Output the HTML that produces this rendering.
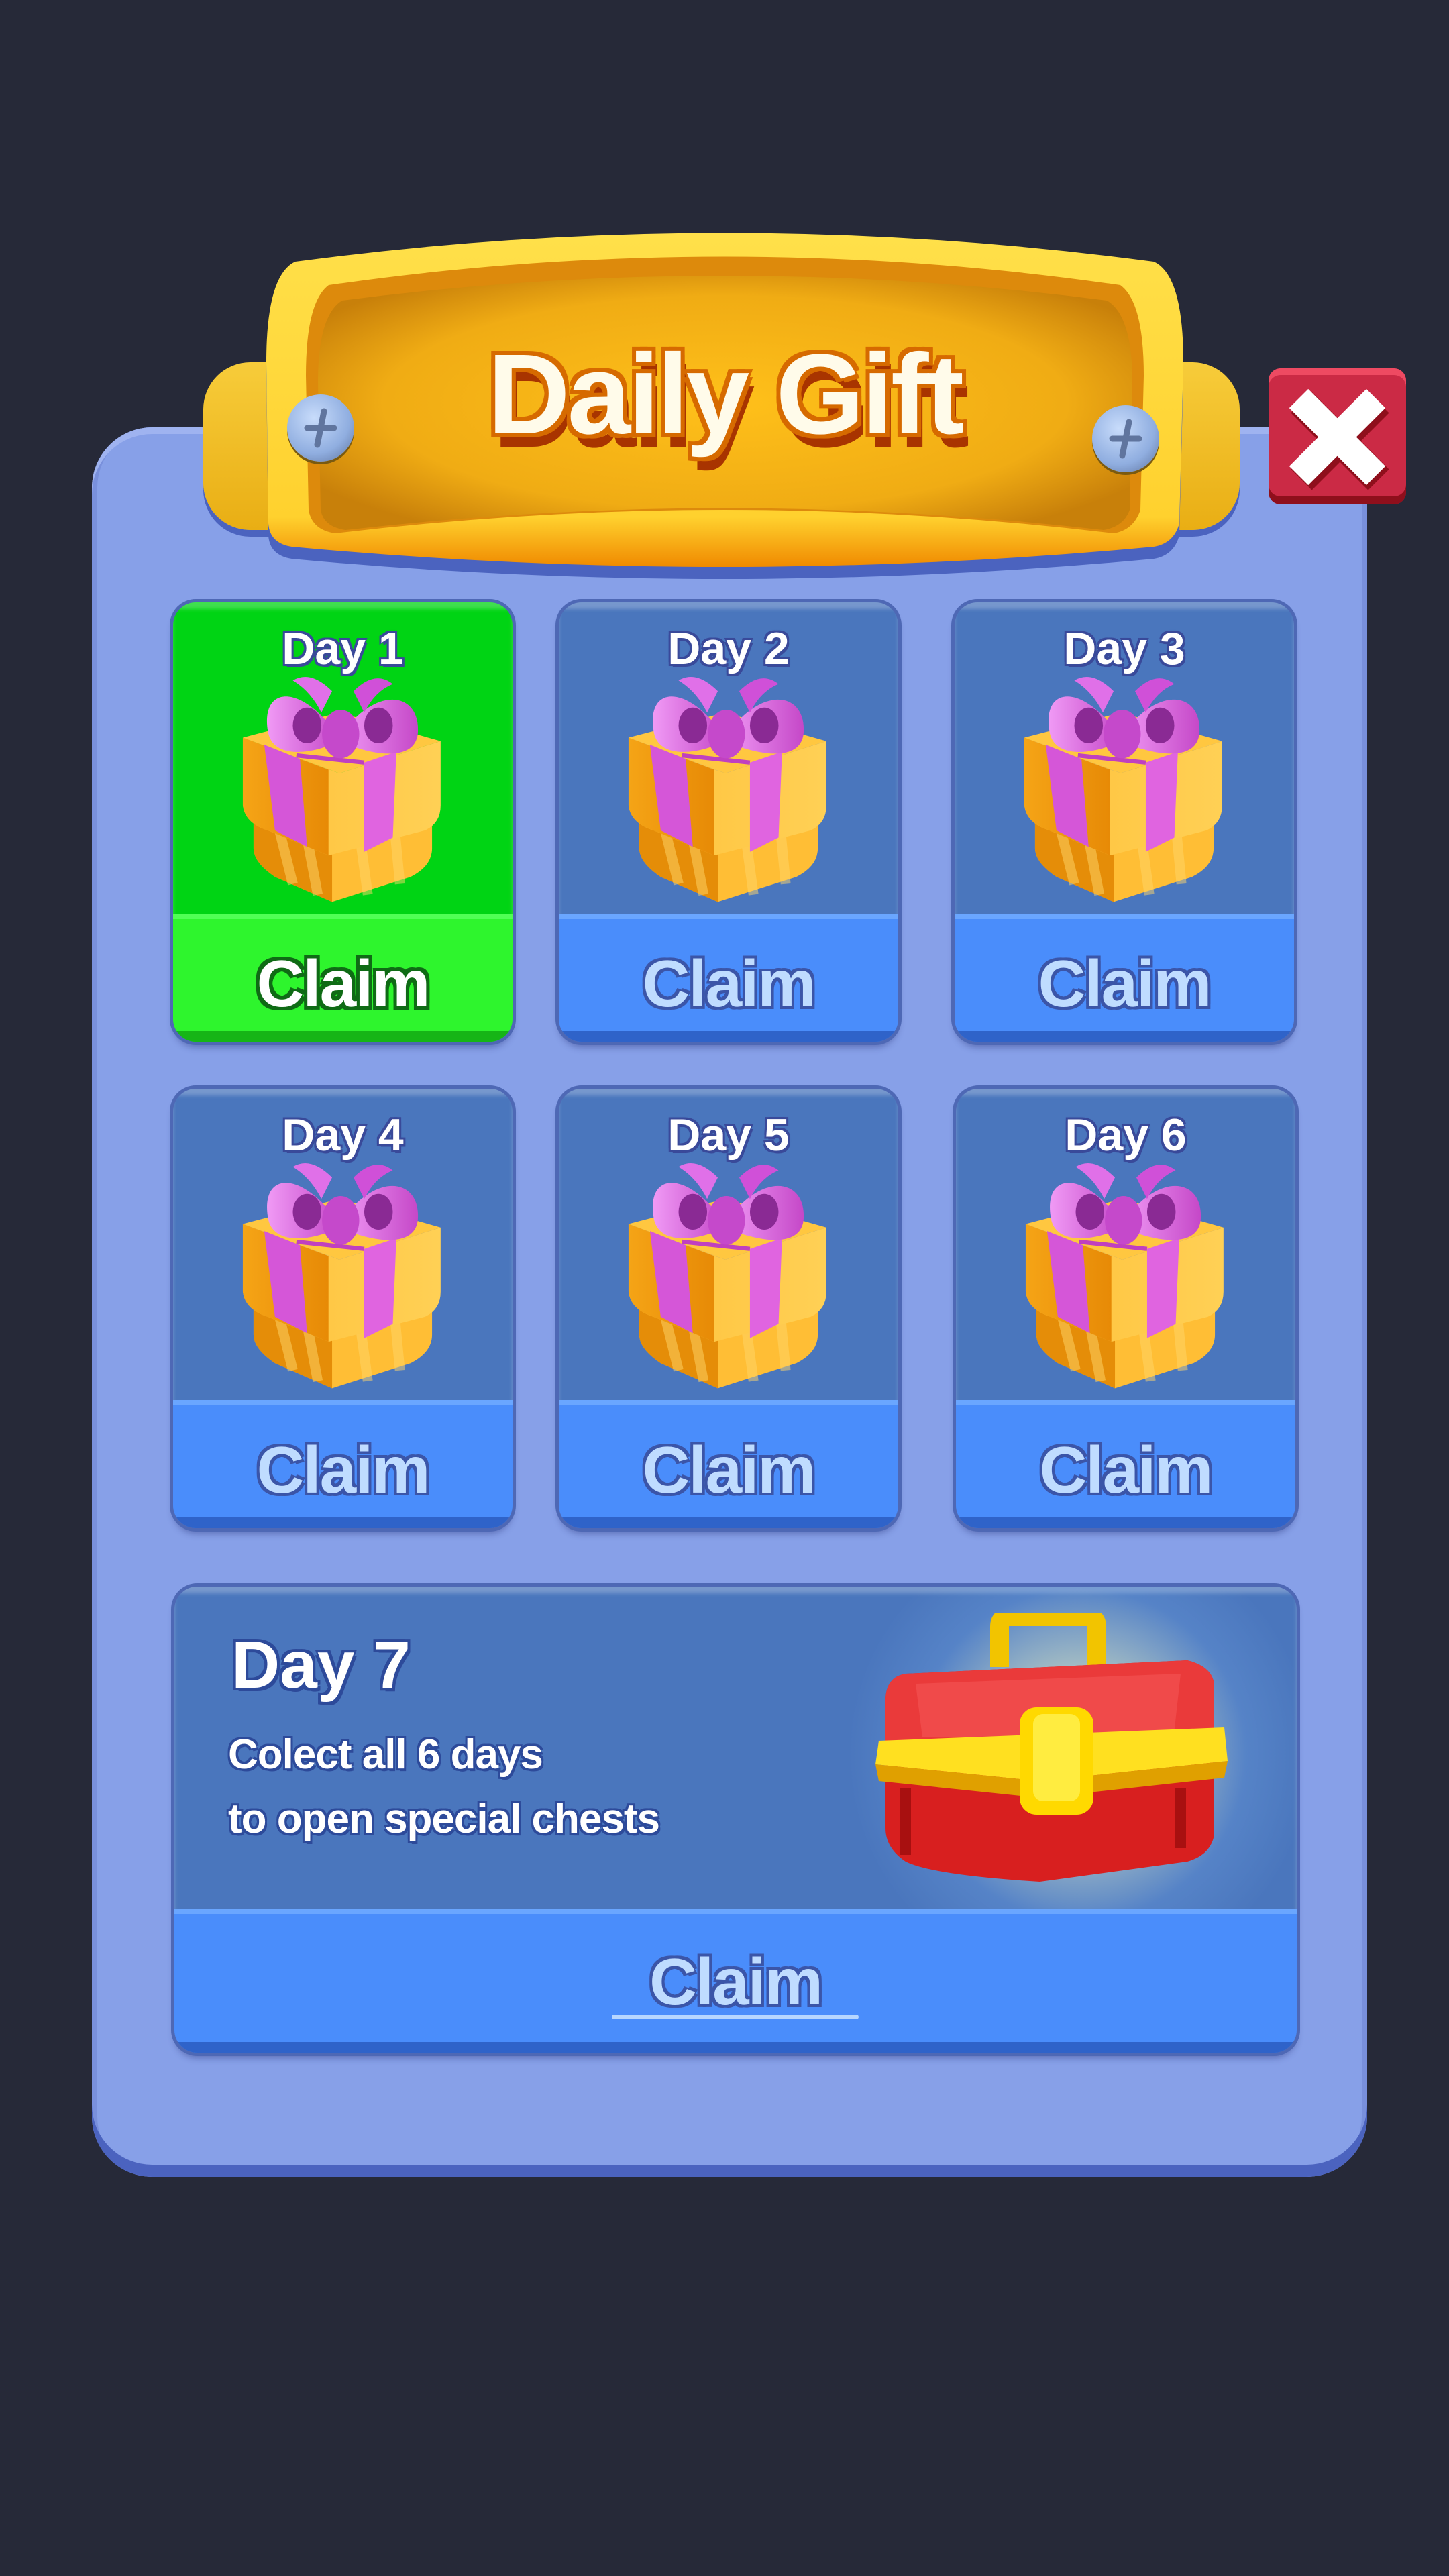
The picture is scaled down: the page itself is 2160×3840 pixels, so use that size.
<!DOCTYPE html>
<html><head><meta charset="utf-8">
<style>
*{margin:0;padding:0;box-sizing:border-box}
html,body{width:2160px;height:3840px;background:#262938;overflow:hidden;font-family:"Liberation Sans",sans-serif}
.abs{position:absolute}
.panel{left:137px;top:637px;width:1901px;height:2608px;border-radius:90px;background:#87a0e8;box-shadow:inset 0 -18px 0 #4b63bf,inset 0 10px 0 #9fb3f0,inset 8px 0 0 #7990dc,inset -8px 0 0 #7990dc;}
.card{border-radius:34px;overflow:hidden;background:#4a76bd;box-shadow:0 0 0 5px #4e68b5,0 8px 10px rgba(30,40,110,.4);}
.card .top{position:absolute;left:0;top:0;right:0;height:466px;box-shadow:inset 0 10px 6px rgba(255,255,255,.25)}
.card .bot{position:absolute;left:0;bottom:0;right:0;height:191px;background:#4a8dfb;border-top:8px solid #6aa6ff;box-shadow:inset 0 -16px 0 #2f63c9}
.day{position:absolute;left:0;right:0;top:30px;text-align:center;font-weight:bold;font-size:68px;color:#fff;text-shadow:0 0 4px #3a4a9a,3px 4px 0 #3a4a9a,-3px -3px 0 #3a4a9a,3px -3px 0 #3a4a9a,-3px 3px 0 #3a4a9a}
.claim{position:absolute;left:0;right:0;top:40px;text-align:center;font-weight:bold;font-size:98px;color:#bfdcff;letter-spacing:-2px;text-shadow:4px 4px 0 #3b55a8,-4px -4px 0 #3b55a8,4px -4px 0 #3b55a8,-4px 4px 0 #3b55a8}
.green .top{background:#00d414}
.green .bot{background:#2ef52d;border-top-color:#50ff55;box-shadow:inset 0 -16px 0 #16b516}
.green .claim{color:#fff;text-shadow:5px 5px 0 #0f6b15,-5px -5px 0 #0f6b15,5px -5px 0 #0f6b15,-5px 5px 0 #0f6b15}
.gift{position:absolute;left:50%;margin-left:-165px;top:100px;width:330px;height:352px}
</style></head><body>
<svg width="0" height="0" style="position:absolute">
<defs>
<linearGradient id="gL" x1="0" x2="1"><stop offset="0" stop-color="#f5a416"/><stop offset="1" stop-color="#e78a06"/></linearGradient>
<linearGradient id="gR" x1="0" x2="1"><stop offset="0" stop-color="#ffc23a"/><stop offset="1" stop-color="#ffd055"/></linearGradient>
<linearGradient id="pk" x1="0" x2="1"><stop offset="0" stop-color="#f09af5"/><stop offset="1" stop-color="#c548c8"/></linearGradient>
<g id="giftg">
<path d="M30 160 L30 250 Q30 270 60 290 L140 325 L250 290 Q280 275 280 250 L280 165 L150 200 Z" fill="#ffbe35"/>
<path d="M30 160 L30 250 Q30 270 60 290 L140 325 L140 200 Z" fill="#e58d08"/>
<path d="M60 200 L85 300 M100 210 L120 315 M175 205 L190 315 M225 195 L235 300" stroke="#ffd76a" stroke-width="14" opacity=".5"/>
<path d="M15 95 L15 190 Q18 215 50 225 L135 260 L270 225 Q292 215 292 190 L292 100 L150 145 Z" fill="url(#gR)"/>
<path d="M15 95 L15 190 Q18 215 50 225 L135 260 L135 140 Z" fill="url(#gL)"/>
<path d="M15 95 L150 60 L292 100 L150 145 Z" fill="#ffc740"/>
<path d="M45 105 L60 225 L105 248 L95 125 Z" fill="#d556d8"/>
<path d="M185 130 L185 255 L225 235 L230 115 Z" fill="#e064e0"/>
<path d="M90 120 L185 130" stroke="#c040c0" stroke-width="6"/>
<path d="M150 95 C100 20 40 20 50 85 C55 125 110 120 150 100 Z" fill="url(#pk)"/>
<path d="M150 95 C200 20 265 30 260 90 C255 130 195 120 150 100 Z" fill="url(#pk)"/>
<ellipse cx="105" cy="78" rx="20" ry="25" fill="#8a2a94"/>
<ellipse cx="205" cy="78" rx="20" ry="25" fill="#8a2a94"/>
<path d="M85 15 Q110 0 140 30 L125 60 Q110 30 85 15 Z" fill="#e070e8"/>
<path d="M170 30 Q200 0 225 20 Q200 30 185 60 Z" fill="#d050d8"/>
<ellipse cx="152" cy="90" rx="26" ry="34" fill="#c549cb"/>
</g>
</defs>
</svg>

<div class="abs panel"></div>

<!-- banner side tabs -->
<div class="abs" style="left:303px;top:540px;width:1545px;height:250px;border-radius:70px;background:linear-gradient(#f7cc3a,#e9ae14);box-shadow:0 10px 0 #4b63bf"></div>
<!-- banner -->
<svg class="abs" style="left:390px;top:340px" width="1380" height="540" viewBox="0 0 1380 540">
<defs>
<linearGradient id="bo" x1="0" y1="0" x2="0" y2="1"><stop offset="0" stop-color="#ffe04a"/><stop offset=".85" stop-color="#ffd12e"/><stop offset="1" stop-color="#f08a00"/></linearGradient>
<radialGradient id="bi" cx=".5" cy=".5" r=".6"><stop offset="0" stop-color="#ffc01a"/><stop offset=".7" stop-color="#f0ac14"/><stop offset="1" stop-color="#c8800a"/></radialGradient>
</defs>
<path d="M50 50 Q690 -35 1330 50 Q1374 70 1374 200 L1368 440 Q1360 470 1330 475 Q690 535 45 475 Q12 470 10 440 L7 200 Q7 70 50 50 Z" fill="#4b63bf" transform="translate(0,18)"/>
<path d="M50 50 Q690 -35 1330 50 Q1374 70 1374 200 L1368 440 Q1360 470 1330 475 Q690 535 45 475 Q12 470 10 440 L7 200 Q7 70 50 50 Z" fill="url(#bo)"/>
<path d="M100 85 Q690 0 1280 85 Q1315 110 1315 220 L1310 420 Q1300 450 1270 455 Q690 385 110 455 Q75 450 70 420 L66 220 Q66 110 100 85 Z" fill="#dd8a0c"/>
<path d="M120 108 Q690 34 1260 108 Q1298 130 1298 230 L1294 420 Q1285 445 1255 450 Q690 385 125 450 Q92 445 88 420 L84 230 Q84 130 120 108 Z" fill="url(#bi)"/>
</svg>
<!-- screws -->
<div class="abs" style="left:428px;top:588px;width:100px;height:100px;border-radius:50%;background:radial-gradient(circle at 40% 35%,#c8dcfb,#90aee0 60%,#5a6f9a);box-shadow:0 4px 0 #7a5a10"></div>
<div class="abs" style="left:1628px;top:604px;width:100px;height:100px;border-radius:50%;background:radial-gradient(circle at 40% 35%,#c8dcfb,#90aee0 60%,#5a6f9a);box-shadow:0 4px 0 #7a5a10"></div>
<svg class="abs" style="left:428px;top:588px" width="100" height="100"><path d="M30 50 L70 50 M55 25 L45 75" stroke="#60759e" stroke-width="9" stroke-linecap="round"/></svg>
<svg class="abs" style="left:1628px;top:604px" width="100" height="100"><path d="M30 50 L70 50 M55 25 L45 75" stroke="#60759e" stroke-width="9" stroke-linecap="round"/></svg>
<!-- title -->
<div class="abs" style="left:600px;top:490px;width:960px;text-align:center;font-weight:bold;font-size:170px;letter-spacing:-4px;color:#fffbea;text-shadow:6px 6px 0 #d66a00,-6px -6px 0 #d66a00,6px -6px 0 #d66a00,-6px 6px 0 #d66a00,8px 20px 0 #a83400">Daily Gift</div>

<!-- close -->
<div class="abs" style="left:1891px;top:549px;width:205px;height:203px;border-radius:18px;background:#cb2a45;box-shadow:inset 0 10px 0 #ee4a62,inset 0 -12px 0 #8f0f1c"></div>
<svg class="abs" style="left:1891px;top:549px" width="205" height="203" viewBox="0 0 205 203">
<path d="M45 45 L160 160 M160 45 L45 160" stroke="#8f0f1c" stroke-width="44" transform="translate(4,6)"/>
<path d="M45 45 L160 160 M160 45 L45 160" stroke="#fff" stroke-width="40"/>
</svg>

<!-- row 1 -->
<div class="abs card green" style="left:258px;top:898px;width:506px;height:655px"><div class="top"></div><div class="day">Day 1</div><svg class="gift" viewBox="0 0 310 330"><use href="#giftg"/></svg><div class="bot"><div class="claim">Claim</div></div></div>
<div class="abs card" style="left:833px;top:898px;width:506px;height:655px"><div class="top"></div><div class="day">Day 2</div><svg class="gift" viewBox="0 0 310 330"><use href="#giftg"/></svg><div class="bot"><div class="claim">Claim</div></div></div>
<div class="abs card" style="left:1423px;top:898px;width:506px;height:655px"><div class="top"></div><div class="day">Day 3</div><svg class="gift" viewBox="0 0 310 330"><use href="#giftg"/></svg><div class="bot"><div class="claim">Claim</div></div></div>
<!-- row 2 -->
<div class="abs card" style="left:258px;top:1623px;width:506px;height:655px"><div class="top"></div><div class="day">Day 4</div><svg class="gift" viewBox="0 0 310 330"><use href="#giftg"/></svg><div class="bot"><div class="claim">Claim</div></div></div>
<div class="abs card" style="left:833px;top:1623px;width:506px;height:655px"><div class="top"></div><div class="day">Day 5</div><svg class="gift" viewBox="0 0 310 330"><use href="#giftg"/></svg><div class="bot"><div class="claim">Claim</div></div></div>
<div class="abs card" style="left:1425px;top:1623px;width:506px;height:655px"><div class="top"></div><div class="day">Day 6</div><svg class="gift" viewBox="0 0 310 330"><use href="#giftg"/></svg><div class="bot"><div class="claim">Claim</div></div></div>

<!-- day 7 -->
<div class="abs card" style="left:260px;top:2365px;width:1673px;height:695px">
<div class="top" style="height:480px"></div>
<div class="abs" style="left:1000px;top:-100px;width:700px;height:700px;border-radius:50%;background:radial-gradient(circle,rgba(255,255,200,.95) 0%,rgba(230,240,200,.6) 25%,rgba(120,170,230,.25) 50%,rgba(74,118,189,0) 70%)"></div>
<div class="abs" style="left:85px;top:60px;font-weight:bold;font-size:100px;color:#fff;text-shadow:4px 5px 0 #2d4a9a,-4px -4px 0 #2d4a9a,4px -4px 0 #2d4a9a,-4px 4px 0 #2d4a9a">Day 7</div>
<div class="abs" style="left:80px;top:203px;font-weight:bold;font-size:62px;line-height:96px;letter-spacing:-1px;color:#fff;text-shadow:3px 4px 0 #2d4a9a,-3px -3px 0 #2d4a9a,3px -3px 0 #2d4a9a,-3px 3px 0 #2d4a9a">Colect all 6 days<br>to open special chests</div>
<svg class="abs" style="left:1030px;top:40px" width="560" height="420" viewBox="0 0 560 420">
<path d="M200 80 L200 20 Q200 5 215 5 L330 5 Q345 5 345 20 L345 80" fill="none" stroke="#f2c400" stroke-width="28"/>
<path d="M60 90 L480 70 Q520 80 520 110 L520 330 Q515 360 480 370 L260 400 Q100 390 60 370 Q30 350 30 320 L30 130 Q30 95 60 90 Z" fill="#d81f1f"/>
<path d="M60 90 L480 70 Q520 80 520 110 L520 190 L30 190 L30 130 Q30 95 60 90 Z" fill="#ea3a3a"/>
<path d="M75 105 L470 90 L460 180 L85 185 Z" fill="#f04a4a"/>
<path d="M20 190 L535 170 L540 220 L260 250 L15 225 Z" fill="#ffe020"/>
<path d="M15 225 L260 250 L540 220 L535 245 L260 275 L20 250 Z" fill="#e0a000"/>
<rect x="230" y="140" width="110" height="160" rx="25" fill="#ffd900"/>
<rect x="250" y="150" width="70" height="130" rx="15" fill="#ffec40"/>
<path d="M60 260 L60 360 M470 260 L470 350" stroke="#a81010" stroke-width="16"/>
</svg>
<div class="bot" style="height:215px"><div class="claim" style="top:45px">Claim</div><div class="abs" style="left:652px;top:150px;width:368px;height:7px;border-radius:4px;background:#b6d6ff"></div></div>
</div>
</body></html>
